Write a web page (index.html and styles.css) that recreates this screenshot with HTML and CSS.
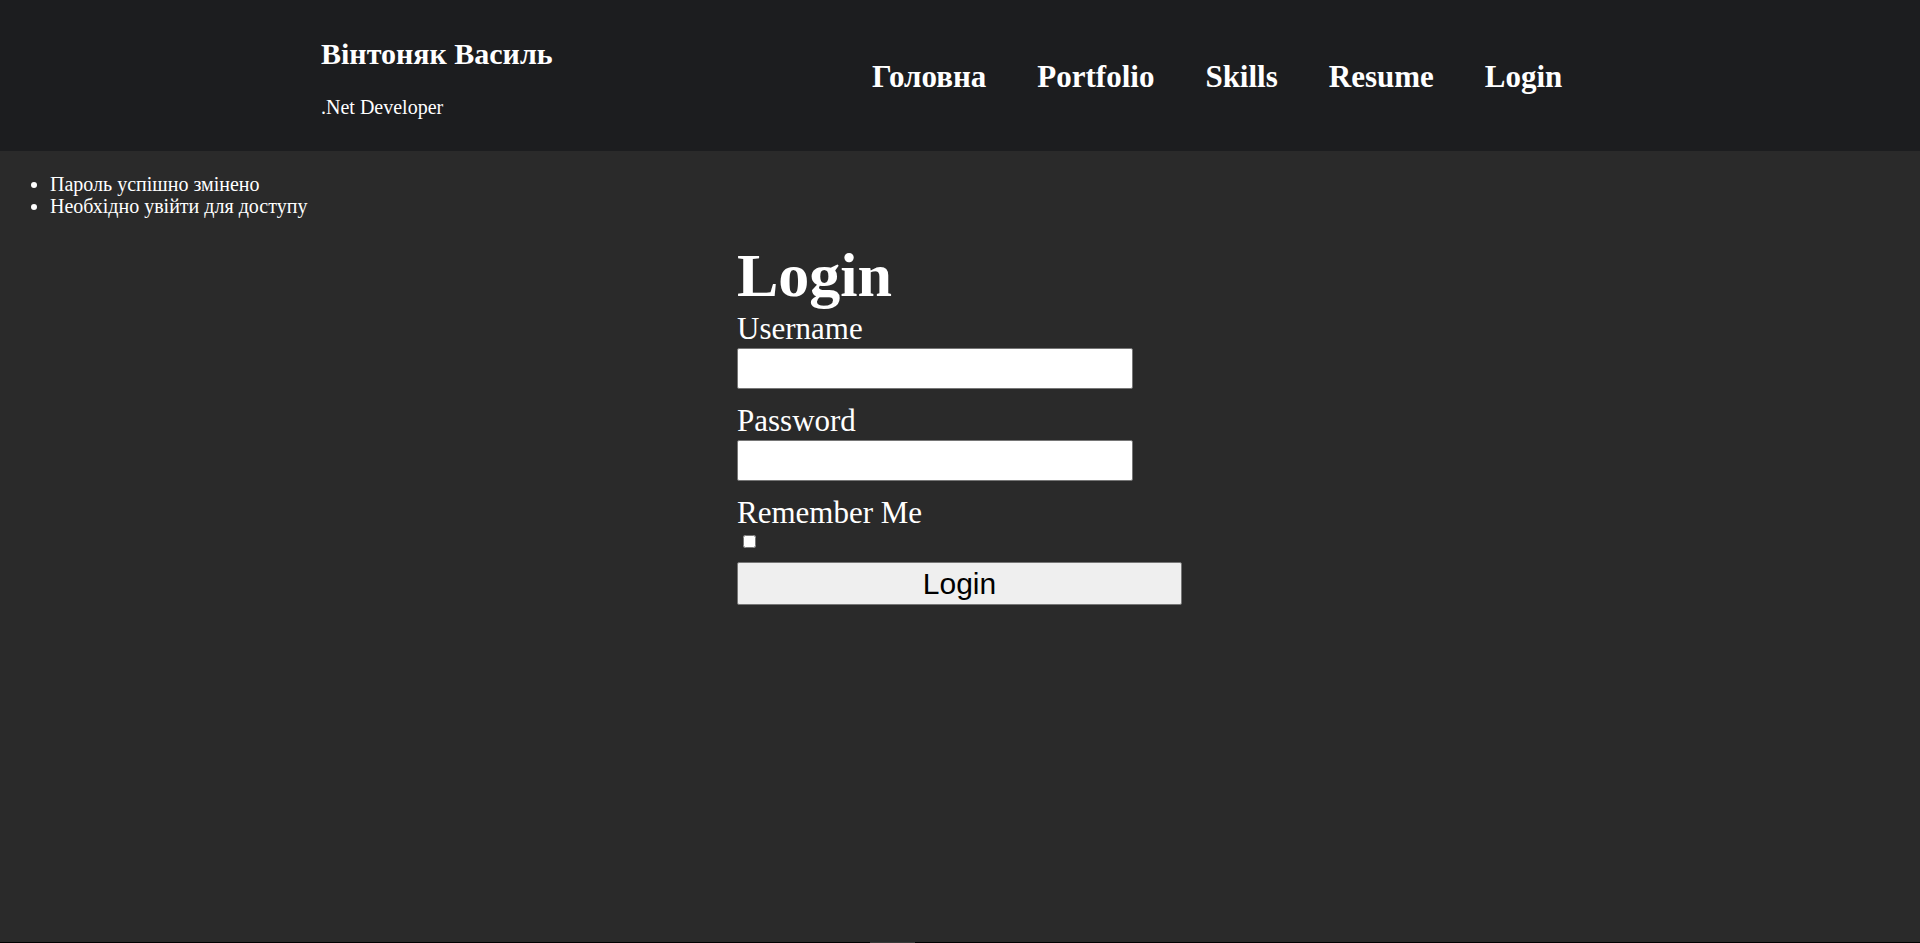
FILE: index.html
```html
<!DOCTYPE html>
<html lang="uk">
<head>
<meta charset="utf-8">
<title>Login</title>
<link rel="stylesheet" href="styles.css">
</head>
<body>
<header class="site-header">
  <div class="brand">
    <div class="brand-name">Вінтоняк Василь</div>
    <div class="brand-role">.Net Developer</div>
  </div>
  <nav class="nav">
    <a class="nav-link" href="#">Головна</a>
    <a class="nav-link" href="#">Portfolio</a>
    <a class="nav-link" href="#">Skills</a>
    <a class="nav-link" href="#">Resume</a>
    <a class="nav-link" href="#">Login</a>
  </nav>
</header>
<main class="main">
  <ul class="messages">
    <li>Пароль успішно змінено</li>
    <li>Необхідно увійти для доступу</li>
  </ul>
  <form class="login-form">
    <h1 class="login-title">Login</h1>
    <label class="field-label" for="username">Username</label>
    <input class="field-input" id="username" type="text">
    <label class="field-label" for="password">Password</label>
    <input class="field-input" id="password" type="password">
    <label class="field-label" for="remember">Remember Me</label>
    <input class="field-check" id="remember" type="checkbox">
    <button class="submit-btn" type="button">Login</button>
  </form>
</main>
<footer class="site-footer"><span class="footer-mark"></span></footer>
</body>
</html>
```

FILE: styles.css
```css
html, body {
  margin: 0;
  padding: 0;
}
body {
  background: #2a2a2a;
  color: #fff;
  font-family: "Liberation Serif", "Times New Roman", serif;
}
.site-header {
  height: 151px;
  background: #1c1d1f;
  display: flex;
  align-items: flex-start;
  padding-left: 321px;
  box-sizing: border-box;
}
.brand {
  width: 551px;
  padding-top: 37px;
}
.brand-name {
  font-size: 30px;
  font-weight: bold;
  line-height: normal;
}
.brand-role {
  font-size: 20px;
  margin-top: 25px;
  line-height: normal;
}
.nav {
  display: flex;
  gap: 51px;
  margin-top: 59px;
}
.nav-link {
  display: block;
  color: #fff;
  text-decoration: none;
  font-weight: bold;
  font-size: 31px;
  line-height: normal;
}
.main {
  min-height: 791px;
  overflow: hidden;
}
.messages {
  margin: 22px 0 23px;
  padding-left: 50px;
  font-size: 20px;
  line-height: 22px;
}
.login-form {
  width: 446px;
  margin: 0 auto;
}
.login-title {
  margin: 0;
  font-size: 62px;
  line-height: normal;
}
.field-label {
  display: block;
  font-size: 31px;
  line-height: normal;
}
.field-input {
  display: block;
  width: 396px;
  height: 41px;
  box-sizing: border-box;
  margin: 1px 0 14px;
  border: 1px solid #767676;
  border-radius: 2px;
  background: #fff;
}
.field-check {
  display: block;
  margin: 4px 0 14px 6px;
}
.submit-btn {
  display: block;
  width: 445px;
  height: 43px;
  box-sizing: border-box;
  border: 1px solid #767676;
  border-radius: 2px;
  background: #efefef;
  color: #000;
  font-family: "Liberation Sans", Arial, sans-serif;
  font-size: 30px;
  padding: 0;
}
.site-footer {
  height: 40px;
  background: #000;
  position: relative;
}
.footer-mark {
  position: absolute;
  left: 870px;
  top: 0;
  width: 45px;
  height: 40px;
  background: #3a3a3a;
}
```
